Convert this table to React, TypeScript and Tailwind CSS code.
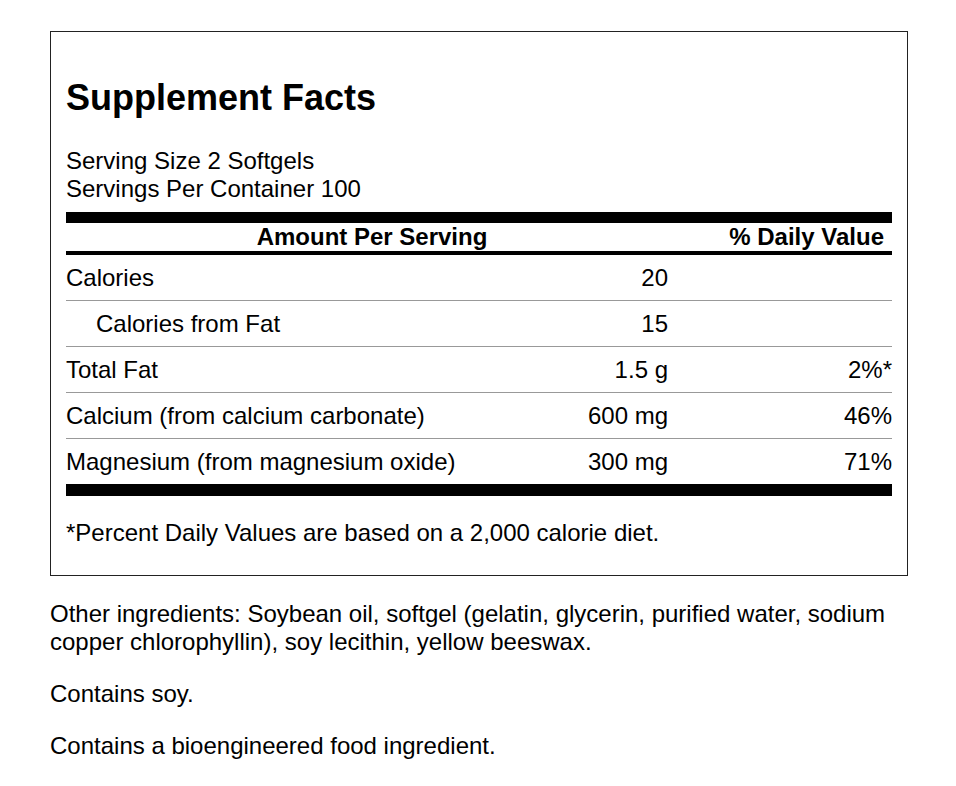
const rows = [
  { name: 'Calories', amount: '20', dv: '', indent: false },
  { name: 'Calories from Fat', amount: '15', dv: '', indent: true },
  { name: 'Total Fat', amount: '1.5 g', dv: '2%*', indent: false },
  { name: 'Calcium (from calcium carbonate)', amount: '600 mg', dv: '46%', indent: false },
  { name: 'Magnesium (from magnesium oxide)', amount: '300 mg', dv: '71%', indent: false },
]

export default function App() {
  return (
    <div className="min-h-screen bg-white pl-[50px] pt-[31px] text-black font-['Liberation_Sans',Arial,sans-serif]">
      <div className="w-[858px] border border-[#222] px-[15px] pt-[44px] pb-[28px]">
        <h1 className="text-[36px] leading-[43px] font-bold">Supplement Facts</h1>

        <div className="mt-[28px] text-[24px] leading-[28px]">
          <div>Serving Size 2 Softgels</div>
          <div>Servings Per Container 100</div>
        </div>

        <div className="mt-[9px] h-[11px] bg-black" />

        {/* header */}
        <div className="grid h-[28px] grid-cols-[1fr_214px] items-center text-[24px] leading-[24px] font-bold">
          <div className="text-center">Amount Per Serving</div>
          <div className="pr-[8px] text-right">% Daily Value</div>
        </div>
        <div className="h-[4px] bg-black" />

        {rows.map((r, i) => (
          <div
            key={r.name}
            className={`grid grid-cols-[1fr_160px_214px] items-center text-[24px] leading-[28px] ${
              i === 0 ? 'h-[45px]' : 'h-[46px] border-t border-[#999]'
            }`}
          >
            <div className={r.indent ? 'pl-[30px]' : ''}>{r.name}</div>
            <div className="pr-[10px] text-right">{r.amount}</div>
            <div className="text-right">{r.dv}</div>
          </div>
        ))}

        <div className="h-[12px] bg-black" />

        <p className="mt-[23px] text-[24px] leading-[28px]">*Percent Daily Values are based on a 2,000 calorie diet.</p>
      </div>

      <div className="w-[858px] text-[24px] leading-[28px]">
        <p className="mt-[24px]">
          Other ingredients: Soybean oil, softgel (gelatin, glycerin, purified water, sodium copper chlorophyllin), soy lecithin, yellow beeswax.
        </p>
        <p className="mt-[24px]">Contains soy.</p>
        <p className="mt-[24px]">Contains a bioengineered food ingredient.</p>
      </div>
    </div>
  )
}
